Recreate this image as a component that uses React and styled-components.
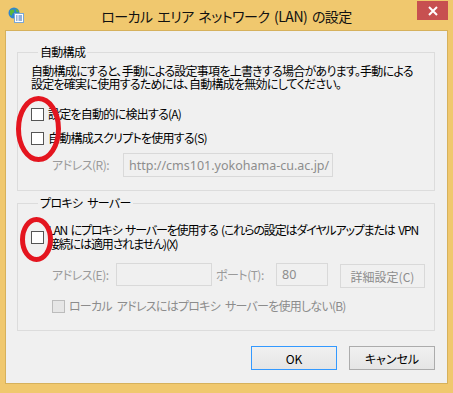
import React from "react";
import styled, { createGlobalStyle } from "styled-components";

const Global = createGlobalStyle`
  html, body { margin: 0; padding: 0; background: #f0c86e; }
  body { font-family: "Noto Sans CJK JP", sans-serif; }
  * { box-sizing: border-box; }
`;

const UI = `"Noto Sans CJK JP", sans-serif`;

const Window = styled.div`
  position: relative;
  width: 453px;
  height: 393px;
  background: #f0c86e;
  display: flex;
  flex-direction: column;
  overflow: hidden;
  font-family: ${UI};
  font-feature-settings: "palt";
`;

const TitleBar = styled.div`
  height: 30px;
  display: grid;
  grid-template-columns: 1fr auto 1fr;
  align-items: start;
`;

const IconBox = styled.div`
  padding: 7px 0 0 8px;
  display: flex;
`;

const Title = styled.div`
  font-family: ${UI};
  font-size: 14px;
  line-height: 18px;
  letter-spacing: -0.5px;
  word-spacing: 2px;
  padding-top: 7px;
  color: #111;
  white-space: nowrap;
`;

const CloseWrap = styled.div`
  display: flex;
  justify-content: flex-end;
  padding: 1px 5px 0 0;
`;

const CloseButton = styled.div`
  width: 31px;
  height: 19px;
  background: #c75050;
  display: flex;
  align-items: center;
  justify-content: center;
`;

const Client = styled.div`
  flex: 1;
  margin: 0 5px 9px 5px;
  border: 1px solid #d6b15c;
  background: #f0f0f0;
  padding: 14px 12px 0 11px;
  display: flex;
  flex-direction: column;
`;

const Group = styled.fieldset`
  margin: ${(p) => p.$mt || 0}px 0 0 0;
  padding: ${(p) => p.$pt}px 0 ${(p) => p.$pb}px 13px;
  border: 1px solid #dcdcdc;
  min-width: 0;
`;

const Legend = styled.legend`
  font-size: 12px;
  line-height: 14px;
  letter-spacing: -0.7px;
  word-spacing: 3px;
  padding: 0 2px;
  margin-left: 7px;
  color: #000;
  font-family: ${UI};
`;

const Description = styled.div`
  font-family: ${UI};
  font-size: 12px;
  line-height: 13px;
  letter-spacing: -0.75px;
  color: #000;
  white-space: nowrap;
`;

const CheckRow = styled.div`
  display: flex;
  align-items: center;
  margin-top: ${(p) => p.$mt}px;
  margin-left: ${(p) => p.$indent || 0}px;
`;

const Box = styled.span`
  flex: none;
  width: 13px;
  height: 13px;
  border: 1px solid ${(p) => (p.$disabled ? "#bcbcbc" : "#555")};
  background: ${(p) => (p.$disabled ? "#e6e6e6" : "#fff")};
`;

const CheckLabel = styled.div`
  font-family: ${UI};
  font-size: 12px;
  line-height: 14px;
  letter-spacing: ${(p) => (p.$tight ? -1.15 : -0.75)}px;
  word-spacing: ${(p) => (p.$tight ? 2 : 3)}px;
  margin-left: 4px;
  color: ${(p) => (p.$disabled ? "#8c8c8c" : "#000")};
  white-space: nowrap;
`;

const FieldRow = styled.div`
  display: flex;
  align-items: flex-start;
  margin-top: ${(p) => p.$mt}px;
  margin-left: 21px;
`;

const FieldLabel = styled.div`
  width: ${(p) => p.$w}px;
  margin-left: ${(p) => p.$ml || 0}px;
  height: 23px;
  display: flex;
  align-items: center;
  font-family: ${UI};
  font-size: 12px;
  letter-spacing: -0.5px;
  color: #9a9a9a;
  white-space: nowrap;
`;

const Input = styled.div`
  width: ${(p) => p.$w}px;
  height: ${(p) => p.$h || 23}px;
  border: 1px solid #d9d9d9;
  background: #f0f0f0;
  padding: 0 5px;
  display: flex;
  align-items: center;
  font-family: "Noto Sans", sans-serif;
  font-size: 12.5px;
  color: #8d8d8d;
  white-space: nowrap;
  overflow: hidden;
`;

const Button = styled.div`
  width: ${(p) => p.$w}px;
  height: 24px;
  margin-left: ${(p) => p.$ml || 0}px;
  margin-top: ${(p) => p.$mt || 0}px;
  border: 1px solid ${(p) => (p.$default ? "#3399ff" : p.$disabled ? "#d9d9d9" : "#acacac")};
  background: ${(p) => (p.$disabled ? "#f0f0f0" : "linear-gradient(#f0f0f0, #e5e5e5)")};
  display: flex;
  align-items: center;
  justify-content: center;
  font-family: ${UI};
  font-size: 12px;
  color: ${(p) => (p.$disabled ? "#8c8c8c" : "#000")};
  white-space: nowrap;
`;

const ButtonRow = styled.div`
  display: flex;
  justify-content: flex-end;
  gap: 12px;
  margin-top: 15px;
`;

const Mark = styled.svg`
  position: absolute;
  left: ${(p) => p.$x}px;
  top: ${(p) => p.$y}px;
  pointer-events: none;
`;

function WindowIcon() {
  return (
    <svg width="16" height="16" viewBox="0 0 16 16">
      <circle cx="6" cy="6" r="5.5" fill="#2f86d0" />
      <path d="M2 3.5 Q4 2 6 3 L6.5 5 L4.5 6.5 L3.5 9 L2 7.5 Z" fill="#5cb83a" />
      <path d="M7.5 1.5 Q10 2.5 11 5 L9 5.5 L8 4 Z" fill="#5cb83a" />
      <rect x="6.5" y="6.5" width="9" height="9" fill="#fff" stroke="#7aa7d6" />
      <rect x="8" y="8.5" width="1.5" height="1" fill="#2a62b5" />
      <rect x="10.5" y="8.5" width="3.5" height="1" fill="#2a62b5" />
      <rect x="8" y="10.5" width="1.5" height="1" fill="#2a62b5" />
      <rect x="10.5" y="10.5" width="3.5" height="1" fill="#2a62b5" />
      <rect x="8" y="12.5" width="1.5" height="1" fill="#2a62b5" />
      <rect x="10.5" y="12.5" width="3.5" height="1" fill="#2a62b5" />
    </svg>
  );
}

export default function App() {
  return (
    <>
      <Global />
      <Window>
        <TitleBar>
          <IconBox>
            <WindowIcon />
          </IconBox>
          <Title>ローカル エリア ネットワーク (LAN) の設定</Title>
          <CloseWrap>
            <CloseButton>
              <svg width="10" height="10" viewBox="0 0 10 10">
                <path d="M1 1 L9 9 M9 1 L1 9" stroke="#fff" strokeWidth="2" />
              </svg>
            </CloseButton>
          </CloseWrap>
        </TitleBar>
        <Client>
          <Group $pt={5} $pb={13}>
            <Legend>自動構成</Legend>
            <Description>
              自動構成にすると、手動による設定事項を上書きする場合があります。手動による
            </Description>
            <Description>
              設定を確実に使用するためには、自動構成を無効にしてください。
            </Description>
            <CheckRow $mt={17}>
              <Box />
              <CheckLabel>設定を自動的に検出する(A)</CheckLabel>
            </CheckRow>
            <CheckRow $mt={10}>
              <Box />
              <CheckLabel>自動構成スクリプトを使用する(S)</CheckLabel>
            </CheckRow>
            <FieldRow $mt={8}>
              <FieldLabel $w={71}>アドレス(R):</FieldLabel>
              <Input $w={210} $h={24}>http://cms101.yokohama-cu.ac.jp/</Input>
            </FieldRow>
          </Group>
          <Group $mt={5} $pt={13} $pb={17}>
            <Legend>プロキシ サーバー</Legend>
            <CheckRow $mt={0}>
              <Box />
              <CheckLabel $tight>
                LAN にプロキシ サーバーを使用する (これらの設定はダイヤルアップまたは VPN
                <br />
                接続には適用されません)(X)
              </CheckLabel>
            </CheckRow>
            <FieldRow $mt={12}>
              <FieldLabel $w={64}>アドレス(E):</FieldLabel>
              <Input $w={96} />
              <FieldLabel $w={60} $ml={4}>ポート(T):</FieldLabel>
              <Input $w={52}>80</Input>
              <Button $w={85} $ml={12} $mt={1} $disabled>詳細設定(C)</Button>
            </FieldRow>
            <CheckRow $mt={11} $indent={21}>
              <Box $disabled />
              <CheckLabel $disabled>ローカル アドレスにはプロキシ サーバーを使用しない(B)</CheckLabel>
            </CheckRow>
          </Group>
          <ButtonRow>
            <Button $w={86} $default>OK</Button>
            <Button $w={86}>キャンセル</Button>
          </ButtonRow>
        </Client>
        <Mark $x={14} $y={94} width="50" height="70" viewBox="0 0 50 70">
          <ellipse cx="24.5" cy="35" rx="20" ry="30.5" fill="none" stroke="#e4151f" strokeWidth="5" />
        </Mark>
        <Mark $x={18} $y={215} width="38" height="50" viewBox="0 0 38 50">
          <ellipse cx="18.5" cy="24.5" rx="14" ry="20" fill="none" stroke="#e4151f" strokeWidth="5" />
        </Mark>
      </Window>
    </>
  );
}
